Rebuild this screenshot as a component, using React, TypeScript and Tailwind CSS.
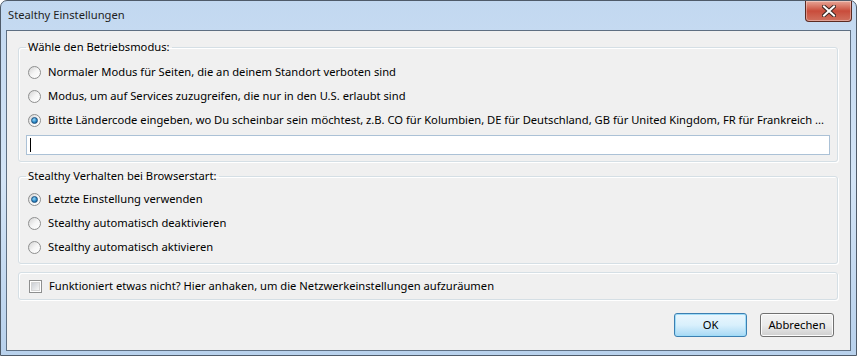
import React from "react";

function Radio({ checked }: { checked?: boolean }) {
  return (
    <span className="relative flex h-[13px] w-[13px] shrink-0 items-center justify-center rounded-full border border-[#8e8f8f] bg-gradient-to-br from-[#d3d3d3] via-[#f5f5f5] to-[#ffffff]">
      {checked && (
        <span className="h-[7px] w-[7px] rounded-full border border-[#1d5180] bg-[radial-gradient(circle_at_40%_35%,#9ad9f6_0%,#2b8ac8_55%,#12497a_100%)]" />
      )}
    </span>
  );
}

function Checkbox() {
  return (
    <span className="flex h-[13px] w-[13px] shrink-0 items-center justify-center border border-[#8e8f8f] bg-white">
      <span className="h-[9px] w-[9px] border border-[#d4d4d4] bg-gradient-to-br from-[#cbcfd5] to-[#f6f6f6]" />
    </span>
  );
}

function Option({ checked, label }: { checked?: boolean; label: string }) {
  return (
    <label className="flex h-[24px] items-center gap-[7px] pl-[2px]">
      <Radio checked={checked} />
      <span className="whitespace-nowrap">{label}</span>
    </label>
  );
}

function Group({ title, children, className }: { title?: string; children: React.ReactNode; className?: string }) {
  return (
    <fieldset className={"mx-0 min-w-0 rounded-[3px] border border-[#d5dfe5] pl-[7px] pr-[7px] shadow-[inset_1px_1px_0_#ffffff,1px_1px_0_#ffffff] " + (className ?? "")}>
      {title && <legend className="px-[2px] leading-[16px]">{title}</legend>}
      {children}
    </fieldset>
  );
}

export default function App() {
  return (
    <div className="h-[356px] w-[857px] overflow-hidden bg-white font-['Noto_Sans',sans-serif] text-[11.2px] text-black">
      <div className="flex h-full w-full flex-col rounded-t-[7px] border border-[#4f5b69] bg-gradient-to-b from-[#c2d8f0] via-[#d3e4f6] to-[#b8d1ec]">
        {/* title bar */}
        <div className="flex h-[29px] shrink-0 items-start justify-between">
          <div className="pl-[7px] pt-[6px] leading-[16px] text-[#1e1e1e]">Stealthy Einstellungen</div>
          <button className="mr-[4px] flex h-[21px] w-[47px] items-center justify-center rounded-b-[4px] border border-t-0 border-[#5b2a22] bg-gradient-to-b from-[#e6a597] via-[#c94c3b] to-[#d0705e] shadow-[inset_0_0_0_1px_rgba(255,255,255,0.35)]">
            <svg width="14" height="12" viewBox="0 0 14 12">
              <path d="M2 1.5 L12 10.5 M12 1.5 L2 10.5" stroke="#3a2622" strokeWidth="4" strokeLinecap="square" />
              <path d="M2 1.5 L12 10.5 M12 1.5 L2 10.5" stroke="#ffffff" strokeWidth="2" strokeLinecap="square" />
            </svg>
          </button>
        </div>

        {/* client area */}
        <div className="mx-[5px] flex h-[321px] min-w-0 flex-col border border-[#5e6f82] bg-[#f0f0f0] pl-[11px] pr-[12px] pt-[8px]">
          <Group title="Wähle den Betriebsmodus:" className="pb-[6px]">
            <div className="flex flex-col pt-[5px]">
              <Option label="Normaler Modus für Seiten, die an deinem Standort verboten sind" />
              <Option label="Modus, um auf Services zuzugreifen, die nur in den U.S. erlaubt sind" />
              <Option checked label="Bitte Ländercode eingeben, wo Du scheinbar sein möchtest, z.B. CO für Kolumbien, DE für Deutschland, GB für United Kingdom, FR für Frankreich ..." />
              <div className="mt-[3px] flex h-[20px] items-center border border-[#abc1d6] bg-white pl-[3px]">
                <span className="h-[14px] w-px bg-black" />
              </div>
            </div>
          </Group>

          <Group title="Stealthy Verhalten bei Browserstart:" className="mt-[6px] pb-[4px]">
            <div className="flex flex-col pt-[3px]">
              <Option checked label="Letzte Einstellung verwenden" />
              <Option label="Stealthy automatisch deaktivieren" />
              <Option label="Stealthy automatisch aktivieren" />
            </div>
          </Group>

          <Group className="mt-[8px]">
            <label className="flex h-[26px] items-center gap-[7px] pl-[3px]">
              <Checkbox />
              <span className="whitespace-nowrap">Funktioniert etwas nicht? Hier anhaken, um die Netzwerkeinstellungen aufzuräumen</span>
            </label>
          </Group>

          <div className="mt-[13px] flex justify-end gap-[13px] pr-[4px]">
            <button className="h-[24px] w-[73px] rounded-[3px] border border-[#3c7fb1] bg-gradient-to-b from-[#eaf6fd] via-[#d9f0fc] to-[#a7d9f5] shadow-[inset_0_0_0_1px_#9fdcf8]">
              OK
            </button>
            <button className="h-[24px] w-[74px] rounded-[3px] border border-[#707070] bg-gradient-to-b from-[#f2f2f2] via-[#ebebeb] to-[#cfcfcf] shadow-[inset_0_0_0_1px_#fcfcfc]">
              Abbrechen
            </button>
          </div>
        </div>
      </div>
    </div>
  );
}
